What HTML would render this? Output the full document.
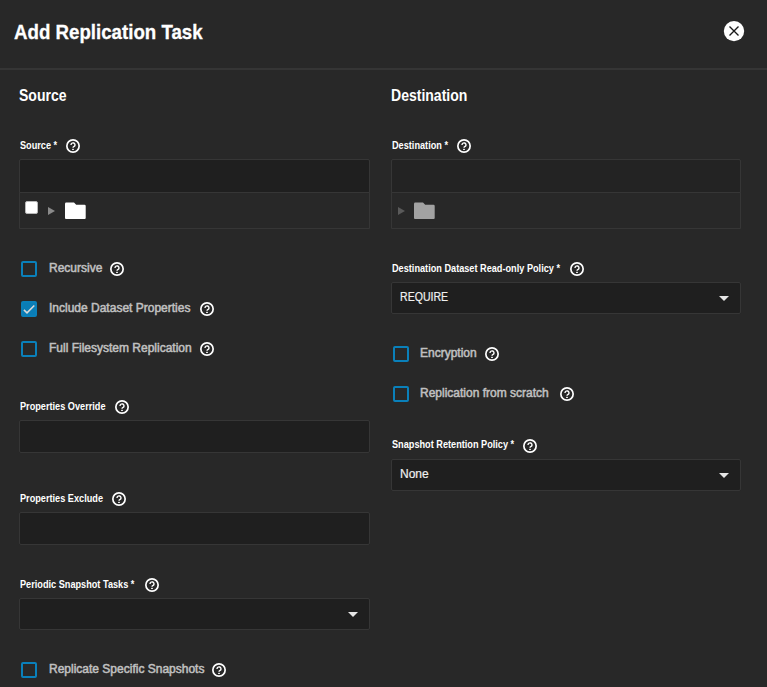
<!DOCTYPE html>
<html><head><meta charset="utf-8">
<style>
*{margin:0;padding:0;box-sizing:border-box}
html,body{width:767px;height:687px;overflow:hidden;background:#282828;font-family:"Liberation Sans",sans-serif}
.a{position:absolute;white-space:nowrap}
.title{left:14px;top:20px;-webkit-text-stroke:0.3px #fff;font-size:21px;font-weight:bold;color:#fff;line-height:24px;transform:scaleX(0.89);transform-origin:0 0}
.close{left:723px;top:20px;width:22px;height:22px;border-radius:50%;background:#fff}
.hr{left:0;top:68px;width:767px;height:2px;background:#353535}
.h{font-size:17px;font-weight:bold;color:#fff;line-height:20px;transform:scaleX(0.825);transform-origin:0 0}
.lbl{font-size:10px;font-weight:bold;color:#fff;line-height:12px;transform:scaleX(0.916);transform-origin:0 0}
.help{width:14px;height:14px}
.inp{background:#1f1f1f;border:1px solid #363636;border-radius:2px}
.tree{border:1px solid #363636;border-radius:2px 2px 0 0}
.cb{width:16px;height:16px;border:2px solid #0a80ba;border-radius:2px}
.cbt{font-size:12px;color:#c0c0c0;line-height:14px;-webkit-text-stroke:0.5px #c0c0c0}
.sel{font-size:12px;color:#f0f0f0;line-height:14px;-webkit-text-stroke:0.2px #f0f0f0}
</style></head><body>
<div class="a title">Add Replication Task</div>
<svg class="a" style="left:723px;top:20px" width="22" height="22" viewBox="0 0 22 22"><circle cx="11" cy="11.1" r="10.2" fill="#fff"/><path d="M6.5 6.6L15.5 15.6M15.5 6.6L6.5 15.6" stroke="#1a1a1a" stroke-width="1.35" fill="none"/></svg>
<div class="a hr"></div>

<div class="a h" style="left:19px;top:86px">Source</div>
<div class="a h" style="left:391px;top:86px">Destination</div>

<svg width="0" height="0" style="position:absolute">
<defs>
<g id="q"><circle cx="7" cy="7" r="6.15" stroke="#fff" stroke-width="1.7" fill="none"/><path d="M5 5.9A2 2 0 1 1 8.53 7.19Q7 7.9 7 8.8" stroke="#fff" stroke-width="1.4" fill="none"/><rect x="6.1" y="9.8" width="1.8" height="1.3" rx="0.5" fill="#fff"/></g>
</defs></svg>

<!-- LEFT COLUMN -->
<div class="a lbl" style="left:20px;top:140px">Source *</div>
<svg class="a help" style="left:66px;top:139px" viewBox="0 0 14 14"><use href="#q"/></svg>
<div class="a tree" style="left:19px;top:159px;width:351px;height:70px"></div>
<div class="a inp" style="left:19px;top:159px;width:351px;height:34px;border-radius:2px 2px 0 0"></div>
<div class="a" style="left:25px;top:201px;width:13px;height:13px;background:#fff;border:1px solid #b8b8b8;border-radius:2px"></div>
<svg class="a" style="left:47px;top:206px" width="9" height="10" viewBox="0 0 9 10"><path d="M1 1L8 5L1 9Z" fill="#8a8a8a"/></svg>
<svg class="a" style="left:64px;top:202px" width="23" height="18" viewBox="0 0 23 18"><path d="M1 2Q1 .6 2.2 .6H10L12.2 2.8H20.5Q21.7 2.8 21.7 4V16Q21.7 17 20.7 17H2Q1 17 1 16Z" fill="#fff"/></svg>

<div class="a cb" style="left:21px;top:261px"></div>
<div class="a cbt" style="left:49px;top:261px">Recursive</div>
<svg class="a help" style="left:110px;top:262px" viewBox="0 0 14 14"><use href="#q"/></svg>

<div class="a cb" style="left:21px;top:301px;background:#0a7db6"><svg width="16" height="16" viewBox="0 0 16 16" style="position:absolute;left:-2px;top:-2px"><path d="M2.9 8.9L6 11.8L13.3 4.5" stroke="#dadada" stroke-width="1.55" fill="none"/></svg></div>
<div class="a cbt" style="left:49px;top:301px">Include Dataset Properties</div>
<svg class="a help" style="left:200px;top:302px" viewBox="0 0 14 14"><use href="#q"/></svg>

<div class="a cb" style="left:21px;top:341px"></div>
<div class="a cbt" style="left:49px;top:341px">Full Filesystem Replication</div>
<svg class="a help" style="left:200px;top:342px" viewBox="0 0 14 14"><use href="#q"/></svg>

<div class="a lbl" style="left:20px;top:401px">Properties Override</div>
<svg class="a help" style="left:115px;top:400px" viewBox="0 0 14 14"><use href="#q"/></svg>
<div class="a inp" style="left:19px;top:420px;width:351px;height:33px"></div>

<div class="a lbl" style="left:20px;top:493px">Properties Exclude</div>
<svg class="a help" style="left:112px;top:492px" viewBox="0 0 14 14"><use href="#q"/></svg>
<div class="a inp" style="left:19px;top:512px;width:351px;height:33px"></div>

<div class="a lbl" style="left:20px;top:579px">Periodic Snapshot Tasks *</div>
<svg class="a help" style="left:145px;top:578px" viewBox="0 0 14 14"><use href="#q"/></svg>
<div class="a inp" style="left:19px;top:598px;width:351px;height:32px"></div>
<svg class="a" style="left:348px;top:612px" width="10" height="5" viewBox="0 0 10 5"><path d="M0 0H10L5 5Z" fill="#e6e6e6"/></svg>

<div class="a cb" style="left:21px;top:662px"></div>
<div class="a cbt" style="left:49px;top:662px">Replicate Specific Snapshots</div>
<svg class="a help" style="left:212px;top:663px" viewBox="0 0 14 14"><use href="#q"/></svg>

<!-- RIGHT COLUMN -->
<div class="a lbl" style="left:392px;top:140px">Destination *</div>
<svg class="a help" style="left:457px;top:139px" viewBox="0 0 14 14"><use href="#q"/></svg>
<div class="a tree" style="left:391px;top:159px;width:350px;height:70px"></div>
<div class="a inp" style="left:391px;top:159px;width:350px;height:34px;border-radius:2px 2px 0 0;background:#232323"></div>
<svg class="a" style="left:397px;top:206px" width="9" height="10" viewBox="0 0 9 10"><path d="M1 1L8 5L1 9Z" fill="#5a5a5a"/></svg>
<svg class="a" style="left:413px;top:202px" width="23" height="18" viewBox="0 0 23 18"><path d="M1 2Q1 .6 2.2 .6H10L12.2 2.8H20.5Q21.7 2.8 21.7 4V16Q21.7 17 20.7 17H2Q1 17 1 16Z" fill="#a2a2a2"/></svg>

<div class="a lbl" style="left:392px;top:263px">Destination Dataset Read-only Policy *</div>
<svg class="a help" style="left:570px;top:262px" viewBox="0 0 14 14"><use href="#q"/></svg>
<div class="a inp" style="left:391px;top:282px;width:350px;height:32px"></div>
<div class="a sel" style="left:400px;top:290px;transform:scaleX(0.88);transform-origin:0 0">REQUIRE</div>
<svg class="a" style="left:719px;top:296px" width="10" height="5" viewBox="0 0 10 5"><path d="M0 0H10L5 5Z" fill="#e6e6e6"/></svg>

<div class="a cb" style="left:393px;top:346px"></div>
<div class="a cbt" style="left:420px;top:346px">Encryption</div>
<svg class="a help" style="left:485px;top:347px" viewBox="0 0 14 14"><use href="#q"/></svg>

<div class="a cb" style="left:393px;top:386px"></div>
<div class="a cbt" style="left:420px;top:386px">Replication from scratch</div>
<svg class="a help" style="left:560px;top:387px" viewBox="0 0 14 14"><use href="#q"/></svg>

<div class="a lbl" style="left:392px;top:439px">Snapshot Retention Policy *</div>
<svg class="a help" style="left:523px;top:439px" viewBox="0 0 14 14"><use href="#q"/></svg>
<div class="a inp" style="left:391px;top:459px;width:350px;height:32px"></div>
<div class="a sel" style="left:400px;top:467px">None</div>
<svg class="a" style="left:719px;top:473px" width="10" height="5" viewBox="0 0 10 5"><path d="M0 0H10L5 5Z" fill="#e6e6e6"/></svg>
</body></html>
